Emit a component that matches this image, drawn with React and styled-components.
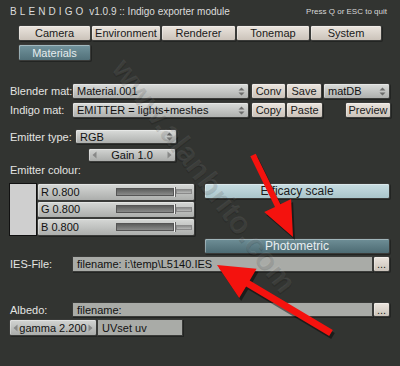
import React from 'react';
import styled, { createGlobalStyle, css } from 'styled-components';

const Global = createGlobalStyle`
  html, body { margin: 0; padding: 0; background: #323431; }
  body { font-family: "Liberation Sans", Arial, sans-serif; }
  * { box-sizing: border-box; }
`;

const Page = styled.div`
  position: relative;
  width: 400px;
  height: 366px;
  overflow: hidden;
  background: #323431;
  color: #e2e2e0;
  font-size: 11px;
  display: flex;
  flex-direction: column;
`;

const Header = styled.div`
  display: flex;
  justify-content: space-between;
  align-items: center;
  height: 12px;
  margin-top: 5px;
  padding: 0 13px 0 10px;
`;
const Title = styled.div`
  font-size: 10px;
  color: #dcdcdc;
  white-space: nowrap;
`;
const Brand = styled.span`
  letter-spacing: 3.1px;
`;
const QuitHint = styled.div`
  font-size: 8px;
  color: #d8d8d8;
  white-space: nowrap;
`;

const bevel = css`
  border: 1px solid #3a3b39;
  border-radius: 2px;
  box-shadow: inset 1px 1px 0 rgba(255, 255, 255, 0.35), 1px 1px 0 rgba(0, 0, 0, 0.3);
`;

const TabGrid = styled.div`
  display: grid;
  grid-template-columns: 73px 70px 75px 74px 72px;
  row-gap: 3px;
  margin: 8px 0 0 18px;
`;
const Tab = styled.div`
  ${bevel};
  height: ${p => (p.$active ? 17 : 16)}px;
  display: flex;
  align-items: center;
  justify-content: center;
  color: ${p => (p.$active ? '#e4ecee' : '#1a1a1a')};
  background: ${p =>
    p.$active
      ? 'linear-gradient(#72949d, #52717a)'
      : 'linear-gradient(#ebe5de, #cbc3ba)'};
`;

const FormRow = styled.div`
  display: flex;
  align-items: center;
  height: ${p => p.$h || 16}px;
  margin-top: ${p => p.$mt || 0}px;
  padding-left: ${p => (p.$pl ?? 10)}px;
`;
const Label = styled.div`
  width: ${p => p.$w}px;
  flex: none;
  color: #e4e4e2;
  white-space: nowrap;
`;
const Spacer = styled.div`
  width: ${p => p.$w}px;
  flex: none;
`;

const Dropdown = styled.div`
  ${bevel};
  width: ${p => p.$w}px;
  flex: none;
  height: 100%;
  display: flex;
  align-items: center;
  color: #111;
  background: linear-gradient(#dadcda, #aeb0ae);
`;
const DropText = styled.span`
  flex: 1;
  padding-left: 4px;
  white-space: nowrap;
  overflow: hidden;
`;
const DropArrows = styled.span`
  width: 13px;
  height: 100%;
  flex: none;
  display: flex;
  align-items: center;
  justify-content: center;
`;

const Button = styled.div`
  ${bevel};
  width: ${p => p.$w}px;
  flex: none;
  height: 100%;
  display: flex;
  align-items: center;
  justify-content: center;
  color: #1a1a1a;
  background: linear-gradient(#ebe5de, #cbc3ba);
  white-space: nowrap;
`;

const NumField = styled.div`
  ${bevel};
  width: ${p => p.$w}px;
  flex: none;
  height: 100%;
  display: flex;
  align-items: center;
  justify-content: space-between;
  padding: 0 3px;
  color: #111;
  background: linear-gradient(#d2d4d2, #aaacaa);
`;

const TextField = styled.div`
  border: 1px solid #3a3b39;
  width: ${p => p.$w}px;
  flex: none;
  height: 100%;
  display: flex;
  align-items: center;
  padding-left: 4px;
  color: #111;
  background: #a9aba7;
  white-space: nowrap;
  box-shadow: 1px 1px 0 rgba(0, 0, 0, 0.3);
`;

const ColourLabel = styled.div`
  height: 13px;
  line-height: 13px;
  margin-top: 2px;
  padding-left: 10px;
  color: #e4e4e2;
`;

const ColourBlock = styled.div`
  display: flex;
  margin-top: 6px;
  padding-left: 9px;
  height: 53px;
`;
const Swatch = styled.div`
  width: 28px;
  height: 100%;
  flex: none;
  background: #cfcfcf;
  border: 1px solid #111;
`;
const SliderStack = styled.div`
  width: 158px;
  flex: none;
  display: grid;
  grid-template-rows: repeat(3, 1fr);
`;
const SliderRow = styled.div`
  ${bevel};
  display: flex;
  align-items: center;
  padding-left: 3px;
  color: #111;
  background: linear-gradient(#d6d8d6, #acaeac);
`;
const SliderLabel = styled.span`
  width: 75px;
  flex: none;
`;
const Track = styled.div`
  width: 76px;
  height: 8px;
  flex: none;
  display: flex;
  align-items: center;
`;
const Fill = styled.div`
  height: 100%;
  flex: none;
  background: linear-gradient(#5c5d5c, #8a8b8a);
  border: 1px solid #555;
`;
const Handle = styled.div`
  width: 2px;
  height: 10px;
  flex: none;
  background: #f0f0f0;
  border-right: 1px solid #666;
`;
const Groove = styled.div`
  flex: 1;
  height: 5px;
  background: linear-gradient(#8c8d8c, #b8b9b8);
  border: 1px solid #8a8a8a;
`;
const RightCol = styled.div`
  width: 186px;
  margin-left: 9px;
  flex: none;
  display: flex;
  flex-direction: column;
`;
const ColorButton = styled.div`
  ${bevel};
  height: 16px;
  width: ${p => p.$w || 186}px;
  display: flex;
  align-items: center;
  justify-content: center;
  font-size: 12px;
  color: ${p => (p.$dark ? '#e8eef0' : '#1c1c1c')};
  background: ${p =>
    p.$dark ? 'linear-gradient(#6f8f97, #4d6b73)' : 'linear-gradient(#c8dde2, #a9c5cb)'};
`;

const Overlay = styled.svg`
  position: absolute;
  left: 0;
  top: 0;
  pointer-events: none;
`;
const Watermark = styled.div`
  position: absolute;
  left: 204px;
  top: 176px;
  transform: translate(-50%, -50%) rotate(53deg);
  font-size: 31px;
  font-weight: bold;
  color: rgba(220, 220, 220, 0.09);
  white-space: nowrap;
  pointer-events: none;
  text-shadow: 1px 1px 0 rgba(0, 0, 0, 0.12);
`;

const UpDown = () => (
  <svg width="7" height="9" viewBox="0 0 7 9">
    <path d="M3.5 0.5 L6.5 3.5 L0.5 3.5 Z M3.5 8.5 L6.5 5.5 L0.5 5.5 Z" fill="#6a6b6a" />
  </svg>
);
const LeftTri = () => (
  <svg width="5" height="8" viewBox="0 0 5 8">
    <path d="M4.5 0.5 L0.5 4 L4.5 7.5 Z" fill="#888988" />
  </svg>
);
const RightTri = () => (
  <svg width="5" height="8" viewBox="0 0 5 8">
    <path d="M0.5 0.5 L4.5 4 L0.5 7.5 Z" fill="#888988" />
  </svg>
);

function arrowPoints(tail, tip, w, hl, hw) {
  const dx = tip[0] - tail[0];
  const dy = tip[1] - tail[1];
  const len = Math.hypot(dx, dy);
  const ux = dx / len, uy = dy / len;
  const px = -uy, py = ux;
  const bx = tip[0] - ux * hl, by = tip[1] - uy * hl;
  const pts = [
    [tail[0] + px * w / 2, tail[1] + py * w / 2],
    [bx + px * w / 2, by + py * w / 2],
    [bx + px * hw, by + py * hw],
    tip,
    [bx - px * hw, by - py * hw],
    [bx - px * w / 2, by - py * w / 2],
    [tail[0] - px * w / 2, tail[1] - py * w / 2],
  ];
  return pts.map(p => p.map(v => v.toFixed(1)).join(',')).join(' ');
}

const ARROWS = [
  { tail: [253, 155], tip: [293, 237], w: 6, hl: 35, hw: 15 },
  { tail: [331, 333], tip: [217, 265], w: 7, hl: 36, hw: 17 },
];

const Slider = ({ label, value }) => (
  <SliderRow>
    <SliderLabel>{label}</SliderLabel>
    <Track>
      <Fill style={{ width: `${Math.round(value * 72)}px` }} />
      <Handle />
      <Groove />
    </Track>
  </SliderRow>
);

export default function App() {
  return (
    <Page>
      <Global />
      <Header>
        <Title>
          <Brand>BLENDIGO</Brand> v1.0.9 :: Indigo exporter module
        </Title>
        <QuitHint>Press Q or ESC to quit</QuitHint>
      </Header>

      <TabGrid>
        <Tab>Camera</Tab>
        <Tab>Environment</Tab>
        <Tab>Renderer</Tab>
        <Tab>Tonemap</Tab>
        <Tab>System</Tab>
        <Tab $active>Materials</Tab>
      </TabGrid>

      <FormRow $mt={22}>
        <Label $w={62}>Blender mat:</Label>
        <Dropdown $w={177}>
          <DropText>Material.001</DropText>
          <DropArrows><UpDown /></DropArrows>
        </Dropdown>
        <Spacer $w={2} />
        <Button $w={35}>Conv</Button>
        <Button $w={36}>Save</Button>
        <Spacer $w={1} />
        <Dropdown $w={67}>
          <DropText>matDB</DropText>
          <DropArrows><UpDown /></DropArrows>
        </Dropdown>
      </FormRow>

      <FormRow $mt={3}>
        <Label $w={62}>Indigo mat:</Label>
        <Dropdown $w={177}>
          <DropText>EMITTER = lights+meshes</DropText>
          <DropArrows><UpDown /></DropArrows>
        </Dropdown>
        <Spacer $w={2} />
        <Button $w={35}>Copy</Button>
        <Button $w={37}>Paste</Button>
        <Spacer $w={22} />
        <Button $w={46}>Preview</Button>
      </FormRow>

      <FormRow $mt={11} $h={15}>
        <Label $w={65}>Emitter type:</Label>
        <Dropdown $w={102}>
          <DropText>RGB</DropText>
          <DropArrows><UpDown /></DropArrows>
        </Dropdown>
      </FormRow>

      <FormRow $mt={4} $h={14} $pl={88}>
        <NumField $w={88}>
          <LeftTri />
          <span>Gain 1.0</span>
          <RightTri />
        </NumField>
      </FormRow>

      <ColourLabel>Emitter colour:</ColourLabel>

      <ColourBlock>
        <Swatch />
        <SliderStack>
          <Slider label="R 0.800" value={0.8} />
          <Slider label="G 0.800" value={0.8} />
          <Slider label="B 0.800" value={0.8} />
        </SliderStack>
        <RightCol>
          <ColorButton>Efficacy scale</ColorButton>
        </RightCol>
      </ColourBlock>

      <FormRow $mt={2} $pl={204}>
        <ColorButton $dark>Photometric</ColorButton>
      </FormRow>

      <FormRow $mt={2}>
        <Label $w={62}>IES-File:</Label>
        <TextField $w={301}>filename: i:\temp\L5140.IES</TextField>
        <Button $w={17}>...</Button>
      </FormRow>

      <FormRow $mt={30} $h={15}>
        <Label $w={62}>Albedo:</Label>
        <TextField $w={301}>filename:</TextField>
        <Button $w={17}>...</Button>
      </FormRow>

      <FormRow $mt={2} $h={17} $pl={9}>
        <NumField $w={88}>
          <LeftTri />
          <span>gamma 2.200</span>
          <RightTri />
        </NumField>
        <TextField $w={86}>UVset uv</TextField>
      </FormRow>

      <Watermark>www.alanbrito.com</Watermark>

      <Overlay width="400" height="366" viewBox="0 0 400 366">
        {ARROWS.map((a, i) => (
          <g key={i}>
            <polygon
              points={arrowPoints(a.tail, a.tip, a.w, a.hl, a.hw)}
              fill="rgba(0,0,0,0.45)"
              transform="translate(2,3)"
            />
            <polygon points={arrowPoints(a.tail, a.tip, a.w, a.hl, a.hw)} fill="#f4120e" />
          </g>
        ))}
      </Overlay>
    </Page>
  );
}
